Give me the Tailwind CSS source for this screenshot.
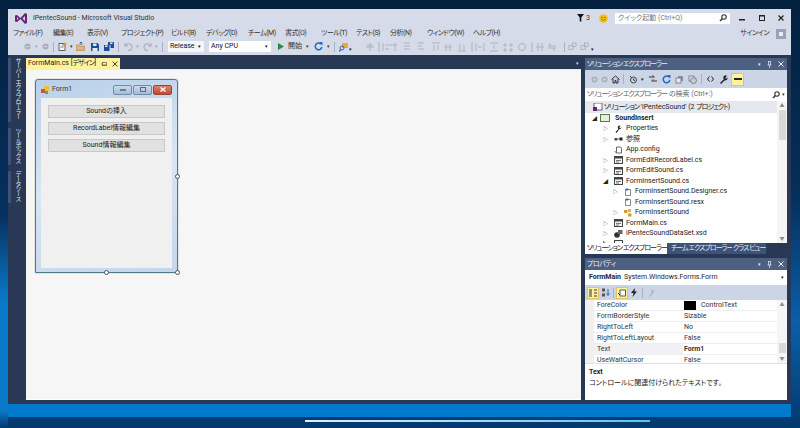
<!DOCTYPE html>
<html lang="ja">
<head>
<meta charset="UTF-8">
<title>iPentecSound - Microsoft Visual Studio</title>
<script src="https://cdn.jsdelivr.net/npm/@tailwindcss/browser@4"></script>
</head>
<body class="w-[800px] h-[428px] overflow-hidden relative bg-[linear-gradient(180deg,#04203f_0%,#052e5a_45%,#0a5fa8_75%,#04386e_100%)] font-['Roboto','Noto_Sans_CJK_JP',sans-serif] [font-feature-settings:'palt'] text-[7px] leading-none whitespace-nowrap text-[#1e1e1e]">

<!-- wallpaper -->
<div class="absolute left-0 top-0 w-[8px] h-[428px] bg-[linear-gradient(180deg,#04203f_0%,#06305e_50%,#0a78c8_70%,#0a78c8_96%,#04386e_100%)]"></div>
<div class="absolute left-[305px] top-[420px] w-[345px] h-[2px] bg-gradient-to-r from-[#d8f0ff] via-[#9fdcf5] to-[#5fc0ee]"></div>

<!-- VS window -->
<div class="absolute left-[8px] top-[9px] w-[783px] h-[408px] flex flex-col bg-[#293955]">

  <!-- title + menu + toolbar -->
  <div class="h-[46px] bg-[#d6dbe9] shrink-0">
    <div class="h-[18px] flex items-center pl-[6px]">
      <svg width="14" height="13" viewBox="0 0 14 13"><path d="M1 3.500 3 3 6.500 6 11 1 13 2v9l-2 1-4.500-5L3 10l-2-.5zM3 5v3l1.500-1.500zM11 4 8.500 6.500 11 9z" fill="#68217a"/></svg>
      <span class="ml-[5px] text-[#333]">iPentecSound - Microsoft Visual Studio</span>
      <div class="ml-auto flex items-center">
        <svg width="7" height="8" viewBox="0 0 7 8"><path d="M0 0h7L4.300 3.500V8L2.700 7V3.500z" fill="#111"/></svg>
        <span class="ml-[2px] w-[9px] text-[#333]">3</span>
        <svg class="ml-[4px]" width="9" height="9" viewBox="0 0 9 9"><circle cx="4.500" cy="4.500" r="4.300" fill="#f1c21b"/><circle cx="3" cy="3.500" r=".7" fill="#7a5a00"/><circle cx="6" cy="3.500" r=".7" fill="#7a5a00"/><path d="M2.500 5.500q2 1.800 4 0" stroke="#7a5a00" stroke-width=".7" fill="none"/></svg>
        <div class="ml-[7px] w-[115px] h-[11px] bg-white flex items-center pl-[3px] pr-[3px] text-[#777]">
          <span>クイック起動 (Ctrl+Q)</span>
          <svg class="ml-auto" width="8" height="8" viewBox="0 0 8 8"><circle cx="5" cy="3" r="2.200" stroke="#333" stroke-width="1.100" fill="none"/><path d="M3.300 4.700 1 7" stroke="#333" stroke-width="1.400"/></svg>
        </div>
        <div class="w-[61px] flex items-center text-[#222]">
          <svg class="ml-[9px]" width="6" height="6" viewBox="0 0 6 6"><rect x="0" y="4" width="6" height="1.500" fill="#222"/></svg>
          <svg class="ml-[14px]" width="6" height="6" viewBox="0 0 6 6"><rect x=".5" y=".5" width="5" height="5" fill="none" stroke="#222"/><rect x="0" y="0" width="6" height="1.500" fill="#222"/></svg>
          <svg class="ml-[13px]" width="6" height="6" viewBox="0 0 6 6"><path d="M.5.500l5 5M5.500.500l-5 5" stroke="#222" stroke-width="1.200"/></svg>
        </div>
      </div>
    </div>
    <div class="h-[13px] flex items-center pl-[5px] text-[#333] tracking-[-0.5px]">
      <span class="w-[40px]">ファイル(F)</span><span class="w-[34px]">編集(E)</span><span class="w-[34px]">表示(V)</span><span class="w-[50px]">プロジェクト(P)</span><span class="w-[35px]">ビルド(B)</span><span class="w-[42px]">デバッグ(D)</span><span class="w-[37px]">チーム(M)</span><span class="w-[36px]">書式(O)</span><span class="w-[35px]">ツール(T)</span><span class="w-[34px]">テスト(S)</span><span class="w-[37px]">分析(N)</span><span class="w-[46px]">ウィンドウ(W)</span><span class="w-[40px]">ヘルプ(H)</span>
      <span class="ml-auto text-[#333]">サインイン</span>
      <div class="ml-[7px] mr-[5px] w-[10px] h-[10px] bg-[#9aa3b5] flex items-center justify-center"><div class="w-[4px] h-[4px] bg-[#e8ebf2]"></div></div>
    </div>
    <!-- toolbar -->
    <div class="h-[13px] flex items-center pl-[6px] text-[#333]">
      <div class="w-[3px] h-[11px] bg-[radial-gradient(#8f97aa_35%,transparent_40%)] bg-[length:2px_2px]"></div>
      <svg class="ml-[7px]" width="7" height="7" viewBox="0 0 7 7"><circle cx="3.500" cy="3.500" r="3" fill="#a9afbd"/><path d="M2 3.500h3" stroke="#d6dbe9"/></svg>
      <span class="ml-[4px] text-[#a0a6b5] text-[5px]">▾</span>
      <svg class="ml-[4px]" width="7" height="7" viewBox="0 0 7 7"><circle cx="3.500" cy="3.500" r="3" fill="#a9afbd"/><path d="M2 3.500h3" stroke="#d6dbe9"/></svg>
      <div class="ml-[4px] w-px h-[10px] bg-[#a9b1c3]"></div>
      <svg class="ml-[4px]" width="9" height="9" viewBox="0 0 9 9"><rect x="1" y="1.500" width="6" height="7" fill="#f5f5f5" stroke="#444" stroke-width=".8"/><path d="M4 3h3M2.500 5h3" stroke="#444" stroke-width=".7"/><circle cx="7" cy="2" r="1.500" fill="#d89a2c"/></svg>
      <span class="ml-[3px] text-[5px]">▾</span>
      <svg class="ml-[3px]" width="9" height="9" viewBox="0 0 9 9"><path d="M0 3h3l1 1h5v4.500H0z" fill="#dcb67a" stroke="#a07628" stroke-width=".5"/><path d="M5 0v3M3.500 1.500 5 0l1.500 1.500" stroke="#1f6fb5" fill="none"/></svg>
      <svg class="ml-[6px]" width="8" height="8" viewBox="0 0 8 8"><path d="M0 0h6.500L8 1.500V8H0z" fill="#1c4d9b"/><rect x="2" y=".5" width="3.500" height="2.500" fill="#dfe7f5"/><rect x="1.500" y="5" width="5" height="3" fill="#dfe7f5"/></svg>
      <svg class="ml-[5px]" width="10" height="9" viewBox="0 0 10 9"><path d="M0 3h5.500v6H0z" fill="#1c4d9b"/><path d="M4 0h6v6H6.500V3H4z" fill="#1c4d9b"/><rect x="1" y="3.500" width="2.500" height="1.500" fill="#dfe7f5"/><rect x="6" y=".5" width="2.500" height="1.500" fill="#dfe7f5"/></svg>
      <div class="ml-[4px] w-px h-[10px] bg-[#a9b1c3]"></div>
      <svg class="ml-[5px]" width="9" height="9" viewBox="0 0 9 9"><path d="M1 1v3h3M1.500 4A3.300 3.300 0 1 1 4 8.300" stroke="#a9afbd" fill="none" stroke-width="1.100"/></svg>
      <span class="ml-[3px] text-[#a0a6b5] text-[5px]">▾</span>
      <svg class="ml-[4px]" width="9" height="9" viewBox="0 0 9 9"><path d="M8 1v3H5M7.500 4A3.300 3.300 0 1 0 5 8.300" stroke="#a9afbd" fill="none" stroke-width="1.100"/></svg>
      <span class="ml-[3px] text-[#a0a6b5] text-[5px]">▾</span>
      <div class="ml-[4px] w-px h-[10px] bg-[#a9b1c3]"></div>
      <div class="ml-[5px] w-[36px] h-[11px] bg-[#f5f6f9] flex items-center pl-[2px] pr-[3px] text-[#111]"><span>Release</span><span class="ml-auto text-[5px]">▾</span></div>
      <div class="ml-[5px] w-[62px] h-[11px] bg-white flex items-center pl-[2px] pr-[3px] text-[#111]"><span>Any CPU</span><span class="ml-auto text-[5px]">▾</span></div>
      <svg class="ml-[7px]" width="6" height="7" viewBox="0 0 6 7"><path d="M0 0l6 3.500L0 7z" fill="#2b8a3e"/></svg>
      <span class="ml-[4px]">開始</span>
      <span class="ml-[4px] text-[5px]">▾</span>
      <svg class="ml-[5px]" width="9" height="9" viewBox="0 0 9 9"><path d="M7 2.200A3.300 3.300 0 1 0 7.800 5" stroke="#1c6cc0" stroke-width="1.500" fill="none"/><path d="M5 0h3.500v3.500z" fill="#1c6cc0"/></svg>
      <span class="ml-[4px] text-[5px]">▾</span>
      <div class="ml-[4px] w-px h-[10px] bg-[#a9b1c3]"></div>
      <svg class="ml-[4px]" width="10" height="10" viewBox="0 0 10 10"><rect x="3" y="1" width="6" height="5" fill="#e3a93a"/><circle cx="3" cy="6" r="2" fill="none" stroke="#2a6db5"/><path d="M2 7.500 0 9.500" stroke="#2a6db5" stroke-width="1.300"/></svg>
      <span class="self-end mb-[1px] text-[5px] text-[#222]">▾</span>
      <div class="ml-[4px] w-[3px] h-[11px] bg-[radial-gradient(#8f97aa_35%,transparent_40%)] bg-[length:2px_2px]"></div>
      <!-- layout toolbar, all disabled -->
      <svg class="ml-[5px] text-[#adb3c2]" width="200" height="10" viewBox="0 0 200 10" fill="none" stroke="currentColor">
        <path d="M2 5h8M6 1v8M3 3h6"/>
        <path d="M15 0v10" stroke="#a9b1c3"/>
        <path d="M19 1v8M21 3h6M21 7h4M31 1v8M33 3h-6M40 1h6M40 4h6M40 7h6M54 1h6M54 4h4M54 7h6"/>
        <path d="M68 1h8M70 3v6M74 3v5M82 2v7M86 2v7M80 5h8M94 9h8M96 2v6M100 3v5"/>
        <path d="M108 0v10" stroke="#a9b1c3"/>
        <path d="M112 1v8M120 1v8M114 5h4M126 1h8M126 9h8M130 3v4M140 2h2v2h-2zM146 2h2v2h-2zM140 7h2v2h-2zM146 7h2v2h-2z"/>
        <circle cx="158" cy="5" r="3.500"/>
        <path d="M168 0v10" stroke="#a9b1c3"/>
        <path d="M174 1v8M178 1v8M172 5h8M186 1v3M190 6v3M184 4h8M184 6h8"/>
      </svg>
      <div class="w-px h-[10px] bg-[#a9b1c3]"></div>
      <svg class="ml-[3px] text-[#adb3c2]" width="9" height="9" viewBox="0 0 9 9" fill="none" stroke="currentColor"><rect x="1" y="3.500" width="4" height="4"/><rect x="4.500" y="1" width="3.500" height="3.500"/></svg>
      <svg class="ml-[3px] text-[#adb3c2]" width="9" height="9" viewBox="0 0 9 9" fill="none" stroke="currentColor"><rect x="1" y="3.500" width="4" height="4"/><rect x="4.500" y="1" width="3.500" height="3.500"/></svg>
      <span class="self-end mb-[1px] ml-[2px] text-[5px] text-[#222]">▾</span>
    </div>
  </div>

  <!-- main -->
  <div class="flex-1 flex min-h-0 pt-[3px]">
    <!-- left autohide tabs -->
    <div class="w-[18px] shrink-0 flex flex-col gap-[6px] text-[#e4e8f2] text-[6px] tracking-[-1px]">
      <div class="h-[64px] flex"><span class="w-[3px] bg-[#3f5178]"></span><span class="ml-[4px] [writing-mode:vertical-rl]">サーバー エクスプローラー</span></div>
      <div class="h-[37px] flex"><span class="w-[3px] bg-[#3f5178]"></span><span class="ml-[4px] [writing-mode:vertical-rl]">ツールボックス</span></div>
      <div class="h-[32px] flex"><span class="w-[3px] bg-[#3f5178]"></span><span class="ml-[4px] [writing-mode:vertical-rl]">データソース</span></div>
    </div>

    <!-- document column -->
    <div class="w-[555px] shrink-0 flex flex-col">
      <div class="h-[11px] flex items-stretch shrink-0">
        <div class="w-[94px] bg-[#fff29d] flex items-center pl-[2px] text-[#222]">
          <span>FormMain.cs [<span class="tracking-[-1px]">デザイン</span>]</span>
          <svg class="ml-auto" width="6" height="6" viewBox="0 0 6 6"><path d="M0 3h1M1.500 1v4M1.500 1.500h4v3h-4M1.500 4h4" stroke="#555" stroke-width=".7" fill="none"/></svg>
          <svg class="ml-[5px] mr-[2px]" width="6" height="6" viewBox="0 0 6 6"><path d="M.5.500l5 5M5.500.500l-5 5" stroke="#444"/></svg>
        </div>
        <div class="flex-1 flex items-center justify-end pr-[2px] text-[#d6dbe9] text-[5px]">▾</div>
      </div>
      <div class="h-px bg-[#fff29d] shrink-0"></div>
      <div class="flex-1 bg-[#f6f6f6] border-b border-white">
        <!-- designer form -->
        <div class="ml-[9px] mt-[9px] w-[143px] h-[194px] border border-[#4e7a86] rounded-t-[3px] bg-[linear-gradient(165deg,#b8d0e8,#d8e6f4_50%,#c4d6ec)] px-[5px] pb-[4px] flex flex-col shadow-[0_0_0_1px_#e4e4e4] relative">
          <div class="h-[18px] flex items-center shrink-0 pt-[1px]">
            <svg width="8" height="8" viewBox="0 0 8 8"><rect x="3" y="0" width="5" height="5" fill="#e8c33a"/><rect x="0" y="3" width="4" height="4" fill="#d0562e"/><rect x="4" y="5" width="3" height="3" fill="#5d93c9"/></svg>
            <span class="ml-[3px] text-[#333]">Form1</span>
            <div class="ml-auto flex gap-px">
              <div class="w-[19px] h-[10px] rounded-[2px] border border-[#6c8cab] bg-[linear-gradient(#c9dbed,#a3bdd7)] flex items-center justify-center"><div class="w-[6px] h-[2px] bg-white border border-[#778]"></div></div>
              <div class="w-[19px] h-[10px] rounded-[2px] border border-[#6c8cab] bg-[linear-gradient(#c9dbed,#a3bdd7)] flex items-center justify-center"><div class="w-[6px] h-[5px] bg-transparent border border-[#667]"></div></div>
              <div class="w-[19px] h-[10px] rounded-[2px] border border-[#8c4a3c] bg-[linear-gradient(#e4806a,#c04a33)] flex items-center justify-center"><svg width="6" height="5" viewBox="0 0 6 5"><path d="M.5.500l5 4M5.500.500l-5 4" stroke="#fff" stroke-width="1.300"/></svg></div>
            </div>
          </div>
          <div class="flex-1 bg-[#f0f0f0] px-[7px] pt-[7px] flex flex-col gap-[4px] text-[#222]">
            <div class="h-[13px] border border-[#c8c8c8] bg-[#e1e1e1] flex items-center justify-center">Soundの挿入</div>
            <div class="h-[13px] border border-[#c8c8c8] bg-[#e1e1e1] flex items-center justify-center">RecordLabel情報編集</div>
            <div class="h-[13px] border border-[#c8c8c8] bg-[#e1e1e1] flex items-center justify-center">Sound情報編集</div>
          </div>
          <!-- selection handles -->
          <div class="absolute left-[139px] top-[94px] w-[5px] h-[5px] rounded-full bg-white border border-[#555]"></div>
          <div class="absolute left-[68px] top-[190px] w-[5px] h-[5px] rounded-full bg-white border border-[#555]"></div>
          <div class="absolute left-[139px] top-[190px] w-[5px] h-[5px] rounded-full bg-white border border-[#555]"></div>
        </div>
      </div>
    </div>

    <!-- right panels -->
    <div class="ml-[4px] w-[202px] shrink-0 flex flex-col">
      <!-- solution explorer -->
      <div class="h-[12px] bg-[#4d6082] text-[#e8ecf4] flex items-center px-[2px] shrink-0">
        <span class="tracking-[-1px]">ソリューション エクスプローラー</span>
        <span class="ml-auto text-[5px]">▾</span>
        <svg class="ml-[6px]" width="5" height="7" viewBox="0 0 5 7"><path d="M1 .5h3M1.500.5v3.500M3.500.5v3.500M.5 4h4M2.500 4v3" stroke="#e8ecf4" stroke-width=".7" fill="none"/></svg>
        <svg class="ml-[6px] mr-[1px]" width="6" height="6" viewBox="0 0 6 6"><path d="M.5.500l5 5M5.500.500l-5 5" stroke="#e8ecf4"/></svg>
      </div>
      <div class="h-[18px] bg-[#ccd5e6] flex items-center pl-[6px] shrink-0">
        <svg width="7" height="7" viewBox="0 0 7 7"><circle cx="3.500" cy="3.500" r="3" fill="#a9afbd"/><circle cx="3.500" cy="3.500" r="1.300" fill="#ccd5e6"/></svg>
        <svg class="ml-[3px]" width="7" height="7" viewBox="0 0 7 7"><circle cx="3.500" cy="3.500" r="3" fill="#a9afbd"/><circle cx="3.500" cy="3.500" r="1.300" fill="#ccd5e6"/></svg>
        <svg class="ml-[3px]" width="9" height="9" viewBox="0 0 9 9"><path d="M.5 4.500 4.500 1l4 3.500M2 4v4h2V5.500h1V8h2V4" stroke="#333" fill="none"/></svg>
        <div class="ml-[3px] w-px h-[10px] bg-[#a9b1c3]"></div>
        <svg class="ml-[5px]" width="9" height="9" viewBox="0 0 9 9"><circle cx="4.500" cy="5" r="3" fill="none" stroke="#444"/><path d="M1 1l2 2M4.500 3.500V5L6 6" stroke="#444"/></svg>
        <span class="ml-[3px] text-[5px]">▾</span>
        <svg class="ml-[5px]" width="8" height="8" viewBox="0 0 8 8"><path d="M0 2h5M3.500.500 5.500 2M8 6H3M4.500 4.500 2.500 6" stroke="#333" fill="none"/></svg>
        <svg class="ml-[5px]" width="9" height="9" viewBox="0 0 9 9"><path d="M7 2.200A3.300 3.300 0 1 0 7.800 5" stroke="#1c6cc0" stroke-width="1.500" fill="none"/><path d="M5 0h3.500v3.500z" fill="#1c6cc0"/></svg>
        <svg class="ml-[4px]" width="9" height="9" viewBox="0 0 9 9"><rect x="3" y="1" width="5" height="5" fill="#8c93a3"/><rect x="1" y="3" width="5" height="5" fill="#e5e8ee" stroke="#666" stroke-width=".7"/></svg>
        <svg class="ml-[4px]" width="9" height="9" viewBox="0 0 9 9"><rect x="1" y="1" width="5" height="5" fill="#e5e8ee" stroke="#666" stroke-width=".7"/><circle cx="5.500" cy="5.500" r="3" fill="#c4c9d4" stroke="#666" stroke-width=".7"/></svg>
        <div class="ml-[4px] w-px h-[10px] bg-[#a9b1c3]"></div>
        <svg class="ml-[5px]" width="7" height="6" viewBox="0 0 7 6"><path d="M2.500.500.500 3l2 2.500M4.500.500l2 2.500-2 2.500" stroke="#222" fill="none"/></svg>
        <svg class="ml-[5px]" width="9" height="9" viewBox="0 0 9 9"><path d="M1 8 5 4a2 2 0 0 1 3-3L6.500 2.500v1H7.500L8.500 2.500a2.500 2.500 0 0 1-3 3L2 9z" fill="#222"/></svg>
        <div class="ml-[3px] w-[13px] h-[13px] bg-[#fff29d] border border-[#e5c365] flex items-center justify-center"><div class="w-[8px] h-[2px] bg-[#222]"></div></div>
      </div>
      <div class="h-[13px] bg-white flex items-center pl-[2px] pr-[2px] text-[#666] shrink-0">
        <span><span class="tracking-[-1px]">ソリューション エクスプローラー</span> の検索 (Ctrl+:)</span>
        <svg class="ml-auto" width="8" height="8" viewBox="0 0 8 8"><circle cx="5" cy="3" r="2.200" stroke="#333" stroke-width="1.100" fill="none"/><path d="M3.300 4.700 1 7" stroke="#333" stroke-width="1.400"/></svg>
        <span class="ml-[2px] text-[5px] text-[#333]">▾</span>
      </div>
      <div class="h-[142px] bg-white flex shrink-0 overflow-hidden">
        <div class="flex-1 flex flex-col text-[#222]">
          <div class="h-[12px] bg-[#e6e8f0] flex items-center pl-[8px] shrink-0"><svg width="10" height="9" viewBox="0 0 10 9"><rect x="1" y="0" width="8" height="7" fill="#fff" stroke="#444" stroke-width=".8"/><rect x="0" y="4" width="4" height="4" fill="#68217a"/></svg><span class="ml-[1px]"><span class="tracking-[-1px]">ソリューション</span> 'iPentecSound' (2 <span class="tracking-[-1px]">プロジェクト</span>)</span></div>
          <div class="h-[10.500px] flex items-center pl-[7px] font-bold shrink-0"><span class="w-[8px] text-[5px]">◢</span><svg width="11" height="8" viewBox="0 0 11 8"><rect x=".5" y=".5" width="9" height="7" fill="#e7f0d8" stroke="#5a7a4a"/></svg><span class="ml-[4px]">SoundInsert</span></div>
          <div class="h-[10.500px] flex items-center pl-[18px] shrink-0"><span class="w-[11px] text-[5px] text-[#333]">▷</span><svg width="9" height="8" viewBox="0 0 8 8"><path d="M1 7 4 4a1.500 1.500 0 0 1 2-3L5 2v1h1l1-1a2 2 0 0 1-2 2L2 8z" fill="#222"/></svg><span class="ml-[3px]">Properties</span></div>
          <div class="h-[10.500px] flex items-center pl-[18px] shrink-0"><span class="w-[11px] text-[5px] text-[#333]">▷</span><svg width="9" height="8" viewBox="0 0 8 8"><rect x="0" y="3" width="2.500" height="2.500" fill="#444"/><rect x="5" y="2.500" width="3" height="3" fill="#222"/><path d="M2.500 4H5" stroke="#444"/></svg><span class="ml-[3px]">参照</span></div>
          <div class="h-[10.500px] flex items-center pl-[29px] shrink-0"><svg width="9" height="8" viewBox="0 0 8 8"><path d="M2 1h4l1 1v5H2z" fill="#fff" stroke="#444" stroke-width=".8"/><path d="M0 5l2 2" stroke="#2a8a3e"/></svg><span class="ml-[3px]">App.config</span></div>
          <div class="h-[10.500px] flex items-center pl-[18px] shrink-0"><span class="w-[11px] text-[5px] text-[#333]">▷</span><svg width="9" height="8" viewBox="0 0 9 8"><rect x=".5" y=".5" width="8" height="7" fill="#f4f4f4" stroke="#444"/><rect x=".5" y=".5" width="8" height="2" fill="#444"/><path d="M2 4.500h5M2 6h3" stroke="#444" stroke-width=".7"/></svg><span class="ml-[3px]">FormEditRecordLabel.cs</span></div>
          <div class="h-[10.500px] flex items-center pl-[18px] shrink-0"><span class="w-[11px] text-[5px] text-[#333]">▷</span><svg width="9" height="8" viewBox="0 0 9 8"><rect x=".5" y=".5" width="8" height="7" fill="#f4f4f4" stroke="#444"/><rect x=".5" y=".5" width="8" height="2" fill="#444"/><path d="M2 4.500h5M2 6h3" stroke="#444" stroke-width=".7"/></svg><span class="ml-[3px]">FormEditSound.cs</span></div>
          <div class="h-[10.500px] flex items-center pl-[18px] shrink-0"><span class="w-[11px] text-[5px]">◢</span><svg width="9" height="8" viewBox="0 0 9 8"><rect x=".5" y=".5" width="8" height="7" fill="#f4f4f4" stroke="#444"/><rect x=".5" y=".5" width="8" height="2" fill="#444"/><path d="M2 4.500h5M2 6h3" stroke="#444" stroke-width=".7"/></svg><span class="ml-[3px]">FormInsertSound.cs</span></div>
          <div class="h-[10.500px] flex items-center pl-[28px] shrink-0"><span class="w-[11px] text-[5px] text-[#333]">▷</span><svg width="8" height="8" viewBox="0 0 8 8"><path d="M1.500 1.500h5v6h-5z" fill="#fff" stroke="#555" stroke-width=".7"/><path d="M3 0v3M1.500 1.500h3" stroke="#2a6db5"/></svg><span class="ml-[3px]">FormInsertSound.Designer.cs</span></div>
          <div class="h-[10.500px] flex items-center pl-[39px] shrink-0"><svg width="8" height="8" viewBox="0 0 8 8"><path d="M1.500 1.500h5v6h-5z" fill="#fff" stroke="#555" stroke-width=".7"/><path d="M3 0v3M1.500 1.500h3" stroke="#2a6db5"/></svg><span class="ml-[3px]">FormInsertSound.resx</span></div>
          <div class="h-[10.500px] flex items-center pl-[28px] shrink-0"><span class="w-[11px] text-[5px] text-[#333]">▷</span><svg width="8" height="8" viewBox="0 0 8 8"><rect x="0" y="1" width="3.500" height="3" fill="#d89a2c"/><rect x="4" y="0" width="3" height="3" fill="#e8b24a"/><rect x="4" y="4.500" width="3.500" height="3" fill="#d89a2c"/></svg><span class="ml-[3px]">FormInsertSound</span></div>
          <div class="h-[10.500px] flex items-center pl-[18px] shrink-0"><span class="w-[11px] text-[5px] text-[#333]">▷</span><svg width="9" height="8" viewBox="0 0 9 8"><rect x=".5" y=".5" width="8" height="7" fill="#f4f4f4" stroke="#444"/><rect x=".5" y=".5" width="8" height="2" fill="#444"/><path d="M2 4.500h5M2 6h3" stroke="#444" stroke-width=".7"/></svg><span class="ml-[3px]">FormMain.cs</span></div>
          <div class="h-[10.500px] flex items-center pl-[18px] shrink-0"><span class="w-[11px] text-[5px] text-[#333]">▷</span><svg width="9" height="8" viewBox="0 0 9 8"><ellipse cx="3" cy="5" rx="2.800" ry="2.800" fill="#333"/><rect x="4" y="0" width="4.500" height="4" fill="#666"/></svg><span class="ml-[3px]">iPentecSoundDataSet.xsd</span></div>
          <div class="h-[10.500px] flex items-center pl-[18px] shrink-0"><svg class="mr-[7px]" width="4" height="6" viewBox="0 0 4 6"><path d="M.5.500 3.500 3 .5 5.500z" fill="none" stroke="#333" stroke-width=".7"/></svg><svg width="9" height="8" viewBox="0 0 9 8"><rect x=".5" y=".5" width="8" height="7" fill="#f4f4f4" stroke="#444"/></svg></div>
        </div>
        <div class="w-[10px] bg-[#f5f5f5] flex flex-col items-center shrink-0 text-[#8a8a8a] text-[5px]">
          <span class="h-[9px] flex items-center">▲</span>
          <div class="w-[7px] h-[30px] bg-[#d8d8d8]"></div>
          <span class="mt-auto h-[9px] flex items-center">▼</span>
        </div>
      </div>
      <div class="h-[11px] flex items-stretch shrink-0 text-[#e4e8f2] tracking-[-1px]">
        <span class="w-[82px] bg-white text-[#222] flex items-center pl-[2px]">ソリューション エクスプローラー</span>
        <span class="w-[65px] bg-[#3d5277] flex items-center pl-[4px]">チーム エクスプローラー</span>
        <span class="w-[34px] bg-[#3d5277] flex items-center pl-[1px]">クラス ビュー</span>
      </div>
      <!-- properties -->
      <div class="mt-[4px] h-[12px] bg-[#4d6082] text-[#e8ecf4] flex items-center px-[2px] shrink-0">
        <span class="tracking-[-0.5px]">プロパティ</span>
        <span class="ml-auto text-[5px]">▾</span>
        <svg class="ml-[6px]" width="5" height="7" viewBox="0 0 5 7"><path d="M1 .5h3M1.500.5v3.500M3.500.5v3.500M.5 4h4M2.500 4v3" stroke="#e8ecf4" stroke-width=".7" fill="none"/></svg>
        <svg class="ml-[6px] mr-[1px]" width="6" height="6" viewBox="0 0 6 6"><path d="M.5.500l5 5M5.500.500l-5 5" stroke="#e8ecf4"/></svg>
      </div>
      <div class="h-[15px] bg-white flex items-center pl-[4px] pr-[3px] shrink-0">
        <span class="font-bold">FormMain</span><span class="ml-[3px]">System.Windows.Forms.Form</span><span class="ml-auto text-[5px]">▾</span>
      </div>
      <div class="h-[15px] bg-[#ccd5e6] flex items-center pl-[2px] shrink-0">
        <div class="w-[12px] h-[12px] bg-[#fff29d] border border-[#e5c365] flex items-center justify-center"><svg width="8" height="8" viewBox="0 0 8 8"><path d="M0 1h3M0 3h3M0 5h3M0 7h3M5 1h3M5 4h3M5 7h3" stroke="#333"/></svg></div>
        <svg class="ml-[3px]" width="8" height="9" viewBox="0 0 8 9"><path d="M0 .500h3v3H0zM0 5.500h3v3H0z" fill="#555"/><path d="M6 1v6M4.500 5.500 6 7.500l1.500-2" stroke="#1c6cc0" fill="none"/></svg>
        <div class="ml-[3px] w-px h-[10px] bg-[#a9b1c3]"></div>
        <div class="ml-[2px] w-[12px] h-[12px] bg-[#fff29d] border border-[#e5c365] flex items-center justify-center"><svg width="8" height="8" viewBox="0 0 8 8"><rect x="2" y="1" width="5.500" height="6" fill="#fff" stroke="#333" stroke-width=".8"/><path d="M0 4l2 2" stroke="#333"/></svg></div>
        <svg class="ml-[3px]" width="6" height="9" viewBox="0 0 6 9"><path d="M4 0 0 5h2.500L1.500 9 6 3.500H3.500z" fill="#222"/></svg>
        <div class="ml-[5px] w-px h-[10px] bg-[#a9b1c3]"></div>
        <svg class="ml-[5px]" width="8" height="8" viewBox="0 0 8 8"><path d="M1 7 4 4a1.500 1.500 0 0 1 2-3L5 2v1h1l1-1a2 2 0 0 1-2 2L2 8z" fill="#a9afbd"/></svg>
      </div>
      <div class="h-[63px] bg-white flex overflow-hidden shrink-0">
        <div class="w-[9px] bg-[#f0f0f0] shrink-0"></div>
        <div class="flex-1 flex flex-col text-[#333]">
          <div class="h-[11px] flex border-b border-[#eeeeee] shrink-0"><span class="w-[89px] pl-[3px] flex items-center">ForeColor</span><span class="flex-1 flex items-center pl-[1px]"><span class="w-[12px] h-[9px] bg-black"></span><span class="ml-[5px]">ControlText</span></span></div>
          <div class="h-[11px] flex border-b border-[#eeeeee] shrink-0"><span class="w-[89px] pl-[3px] flex items-center">FormBorderStyle</span><span class="flex-1 flex items-center pl-[1px]">Sizable</span></div>
          <div class="h-[11px] flex border-b border-[#eeeeee] shrink-0"><span class="w-[89px] pl-[3px] flex items-center">RightToLeft</span><span class="flex-1 flex items-center pl-[1px]">No</span></div>
          <div class="h-[11px] flex border-b border-[#eeeeee] shrink-0"><span class="w-[89px] pl-[3px] flex items-center">RightToLeftLayout</span><span class="flex-1 flex items-center pl-[1px]">False</span></div>
          <div class="h-[11px] flex border-b border-[#eeeeee] shrink-0"><span class="w-[89px] pl-[3px] flex items-center bg-[#f0f0f5]">Text</span><span class="flex-1 flex items-center pl-[1px] font-bold">Form1</span></div>
          <div class="h-[11px] flex shrink-0"><span class="w-[89px] pl-[3px] flex items-center">UseWaitCursor</span><span class="flex-1 flex items-center pl-[1px]">False</span></div>
        </div>
        <div class="w-[10px] bg-[#f5f5f5] flex flex-col items-center shrink-0 text-[#8a8a8a] text-[5px]">
          <span class="h-[9px] flex items-center">▲</span>
          <div class="mt-[34px] w-[7px] h-[10px] bg-[#d8d8d8]"></div>
          <span class="mt-auto h-[9px] flex items-center">▼</span>
        </div>
      </div>
      <div class="h-[37px] bg-white border-t border-[#e0e0e0] pl-[4px] pt-[5px] flex flex-col gap-[4px] shrink-0 text-[#222]">
        <span class="font-bold">Text</span>
        <span>コントロールに関連付けられたテキストです。</span>
      </div>
    </div>
  </div>

  <!-- status bar -->
  <div class="mt-[4px] h-[13px] bg-[#007acc] shrink-0"></div>
</div>

</body>
</html>
